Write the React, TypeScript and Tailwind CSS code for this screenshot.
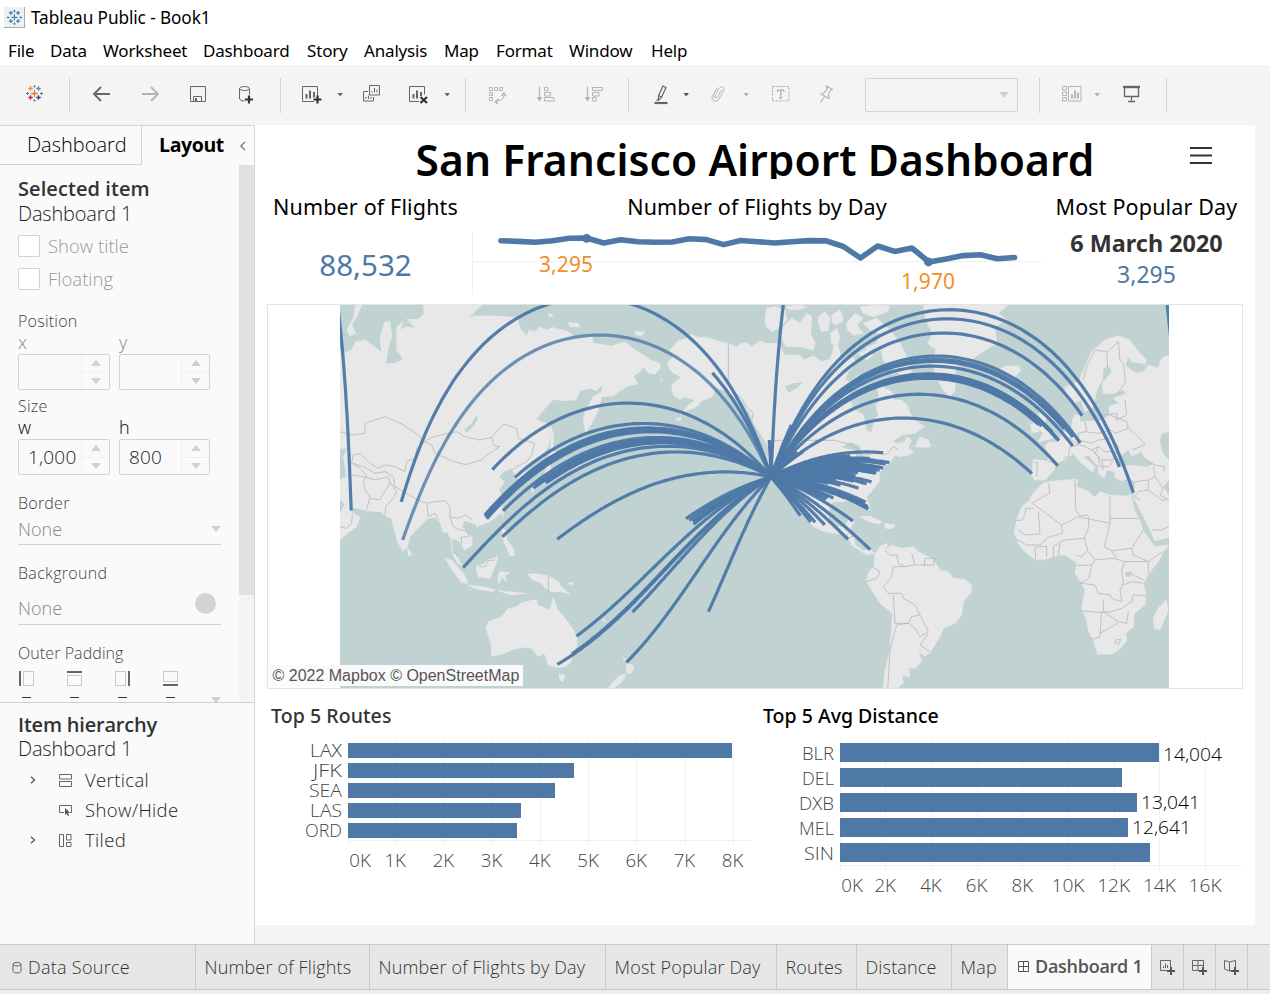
import React from "react";

/* ---------- projection and flight data ---------- */

const WORLD = 829.4;
const LEFT_LON = 50.5;
const EQUATOR_Y = 265.6;
const RAD = Math.PI / 180;

const SFO: [number, number] = [37.62, -122.38];

const AIRPORTS: [number, number, number?][] = [
  // Middle East and Asia
  [25.25, 55.36], [28.57, 77.1], [13.2, 77.7, 0.8], [40.08, 116.6], [37.46, 126.45], [1.36, 103.99],
  [22.31, 113.91], [23.39, 113.3], [24.0, 114.4], [25.08, 121.23], [14.51, 121.02], [31.14, 121.8],
  [34.43, 135.23], [35.76, 140.39], [35.55, 139.78], [13.48, 144.8], [22.0, 114.2], [33.6, 134.4],
  [22.8, 113.6], [23.8, 113.9], [35.0, 136.8],
  // Pacific
  [-33.95, 151.18], [-27.38, 153.12], [-37.67, 144.84], [-37.0, 174.79], [-17.55, -149.6], [-17.75, 177.44],
  [21.32, -157.92], [20.9, -156.43], [21.98, -159.34], [19.74, -156.04], [20.3, -155.8], [64.8, -147.86],
  // Europe
  [38.77, -9.13], [41.3, 2.08], [49.0, 2.55], [51.47, -0.45], [51.15, -0.19], [53.42, -6.27], [52.31, 4.76],
  [50.03, 8.57], [48.35, 11.79], [47.46, 8.55], [55.62, 12.65], [41.0, 28.8], [32.0, 34.88], [52.4, -2.5],
  [49.5, 1.8], [50.3, 0.8], [53.0, -5.0],
  // North America
  [49.19, -123.18], [47.45, -122.31], [45.59, -122.6], [51.13, -114.01], [53.3, -113.58], [43.68, -79.63],
  [45.47, -73.74], [42.36, -71.01], [40.64, -73.78], [40.69, -74.17], [39.87, -75.24], [38.95, -77.46],
  [38.85, -77.04], [39.18, -76.67], [35.88, -78.79], [35.21, -80.94], [33.64, -84.43], [28.43, -81.31],
  [25.79, -80.29], [26.07, -80.15], [27.98, -82.53], [29.99, -90.26], [29.98, -95.34], [30.19, -97.67],
  [32.9, -97.04], [39.86, -104.67], [41.97, -87.91], [44.88, -93.22], [42.21, -83.35], [41.41, -81.85],
  [40.49, -80.23], [40.0, -82.89], [39.05, -84.67], [39.72, -86.29], [39.3, -94.71], [38.75, -90.37],
  [29.53, -98.47], [33.43, -112.01], [33.94, -118.41], [32.73, -117.19], [36.08, -115.15], [40.79, -111.98],
  [36.12, -86.68], [42.94, -87.9], [41.3, -95.89], [35.39, -97.6], [43.56, -116.22], [45.78, -111.15],
  [46.92, -114.09], [45.8, -108.5], [21.04, -86.87], [19.44, -99.07], [20.52, -103.31], [23.15, -109.72],
  [20.68, -105.25], [9.07, -79.38], [13.44, -89.06], [32.1, -110.9], [35.04, -106.6], [36.2, -95.9],
  [37.6, -86.5], [38.2, -85.7], [43.1, -89.3], [34.7, -92.2], [36.3, -94.3], [40.8, -77.8], [31.5, -95.0],
  [43.1, -78.7], [44.5, -88.1], [41.9, -72.7], [26.8, -80.5], [37.6, -90.0], [33.6, -101.8], [39.5, -98.0],
];

const project = (lat: number, lon: number): [number, number] => {
  let d = lon - LEFT_LON;
  while (d < 0) d += 360;
  while (d >= 360) d -= 360;
  const y = EQUATOR_Y - (WORLD / (2 * Math.PI)) * Math.log(Math.tan(Math.PI / 4 + (lat * RAD) / 2));
  return [(d * WORLD) / 360, y];
};

const vec = ([lat, lon]: [number, number]) => [
  Math.cos(lat * RAD) * Math.cos(lon * RAD),
  Math.cos(lat * RAD) * Math.sin(lon * RAD),
  Math.sin(lat * RAD),
];

const line = (points: number[][], dx: number) =>
  points.map(([x, y], i) => `${i ? "L" : "M"}${(x + dx).toFixed(1)},${y.toFixed(1)}`).join("");

function greatCircle(to: [number, number]) {
  const a = vec(SFO);
  const b = vec(to);
  const angle = Math.acos(a[0] * b[0] + a[1] * b[1] + a[2] * b[2]);
  const points: number[][] = [];
  let wrap = 0;
  let lastX = NaN;
  for (let i = 0; i <= 80; i++) {
    const t = i / 80;
    const p = Math.sin((1 - t) * angle) / Math.sin(angle);
    const q = Math.sin(t * angle) / Math.sin(angle);
    const [x, y, z] = [0, 1, 2].map((k) => p * a[k] + q * b[k]);
    const [px, py] = project(Math.asin(z) / RAD, Math.atan2(y, x) / RAD);
    if (px - lastX > WORLD / 2) wrap -= WORLD;
    if (px - lastX < -WORLD / 2) wrap += WORLD;
    points.push([px + wrap, py]);
    lastX = px;
  }
  return wrap ? line(points, 0) + line(points, -wrap) : line(points, 0);
}

/* ---------- land outlines, drawn at three times map size ---------- */

const ASIA = [
  "265,15 440,15 400,55 420,48 480,48 545,52 555,85 575,108 583,90 600,95 612,82 640,90 650,82 700,95 718,110 770,108 775,130 830,138 870,125 900,150 925,165 950,182 975,190 975,205 960,222 940,218 925,200 915,215 895,228 908,252 880,258 850,275 835,288 800,290 790,330 770,370 752,398 745,360 752,330 775,290 800,275 803,253 785,272 765,265 735,272 722,300 690,302 655,298 630,325 603,358 640,372 645,400 640,440 610,480 575,505 572,520 580,545 560,555 548,535 528,505 505,515 492,532 508,545 492,570 505,600 497,640 465,665 430,678 410,668 388,662 380,680 412,715 410,738 388,750 372,722 350,715 350,750 370,775 380,798 368,790 352,760 348,720 338,695 325,698 315,665 300,652 280,655 255,678 225,710 215,745 204,754 188,725 175,680 170,655 150,648 138,635 95,632 55,622 45,635 75,652 65,680 38,700 15,720 15,640 30,612 15,598 15,540 35,530 30,500 25,470 38,445 15,445 15,150 28,160 50,150 62,125 90,120 115,138 140,157 135,110 150,65 165,65 170,110 158,150 152,192 180,190 205,178 185,150 185,80 205,65 195,90 215,80 242,85 215,58 250,58 268,40",
  "35,90 55,55 62,15 80,15 65,50 50,75 62,100 45,108",
  "350,15 372,15 375,30 355,28",
  "640,40 655,45 645,52", "700,68 730,70 735,80 705,80", "905,95 930,98 918,107",
  "645,375 655,400 655,440 647,448", "645,450 670,460 660,475 640,478", "640,485 648,505 635,545 600,560 590,560 610,540 630,520", "590,560 600,565 592,580",
  "500,625 508,632 502,652", "422,675 432,672 428,683",
  "500,685 510,690 515,720 535,745 538,765 525,768 515,745 502,712", "218,745 230,762 220,768",
  "330,775 350,780 385,820 400,850 380,848 355,815", "400,855 440,860 480,868 475,875 420,866",
  "425,798 440,795 460,780 488,770 485,785 475,810 465,835 430,830 424,812",
  "495,815 525,818 510,825 515,845 500,830 492,850 488,835",
  "580,822 605,822 640,828 670,845 680,862 705,882 680,875 650,875 630,865 620,850 590,838",
  "490,872 520,875 570,880 530,885",
  "595,900 605,900 608,915 632,925 645,930 655,893 668,930 690,955 712,985 726,1010 725,1040 705,1090 690,1100 665,1102 640,1095 628,1060 610,1070 590,1045 560,1042 530,1050 505,1062 470,1068 468,1030 453,985 460,965 500,950 520,925 540,922 560,908",
  "672,1122 690,1125 685,1145 675,1140", "825,1163 850,1130 868,1122 868,1135 845,1155 840,1163",
  "700,850 718,847 708,856", "803,955 813,965 807,962",
];

const AMERICA = [
  "200,190 220,170 210,150 235,122 260,115 275,103 290,112 320,112 350,122 385,132 410,140 425,130 440,128 455,140 480,122 500,130 540,130 545,150 555,165 600,165 610,180 640,168 665,185 690,178 700,150 705,120 718,150 725,190 745,180 760,172 768,190 745,215 735,240 750,245 775,225 785,245 760,260 745,290 760,325 790,345 800,392 815,398 822,365 835,345 828,320 838,290 830,260 850,262 875,275 880,300 905,300 925,320 930,340 945,360 973,380 945,400 905,405 875,425 895,430 915,425 920,410 935,420 925,445 940,455 925,465 900,470 885,465 870,490 850,500 838,520 838,545 810,580 798,590 808,615 808,630 798,625 788,600 770,598 740,600 730,605 700,605 688,620 685,655 700,680 735,680 745,660 762,665 750,690 742,700 762,705 765,735 790,752 812,750 828,765 815,760 800,765 775,748 755,735 745,715 720,702 690,698 660,690 635,675 625,645 600,618 590,600 570,585 585,620 600,645 580,620 555,585 540,560 510,540 503,505 505,440 490,415 465,375 452,345 425,300 400,290 380,275 350,262 335,290 305,302 290,320 265,330 240,345 262,318 285,300 255,290 240,298 220,285 215,255 232,240 245,232 215,215",
  "495,60 500,25 525,20 555,30 560,60 535,85 515,95 500,80", "560,20 600,15 620,22 590,30 565,28",
  "540,110 550,80 575,55 600,70 620,40 635,50 632,100 645,130 640,150 600,140 560,140",
  "655,50 675,35 690,55 685,90 665,95 655,70", "695,45 720,30 730,60 710,75 698,70", "692,100 710,85 720,110 710,140 695,130",
  "740,70 765,40 790,55 770,75 790,100 760,105 742,90", "780,20 830,15 870,18 862,35 820,50 790,40",
  "790,70 830,55 870,90 900,130 925,180 935,215 905,225 870,200 850,180 845,150 815,160 795,145 830,130 840,100 810,90",
  "775,160 800,150 820,165 800,180", "105,95 130,95 125,108 108,104", "180,240 188,240 184,243",
  "225,358 245,352 238,362", "780,650 810,650 845,665 835,672 800,658", "855,670 885,675 878,685 855,682",
  "80,1090 102,1098 95,1118 80,1120", "25,1163 50,1135 75,1122 62,1150 40,1163", "5,955 18,965 12,965", "70,1072 78,1078 72,1082",
];

const EAST = [
  "30,765 45,738 70,730 60,750 80,736 110,745 145,740 160,755 200,775 215,795 225,812 250,815 265,835 300,838 320,855 320,875 295,905 290,945 270,970 235,985 225,1010 195,1058 180,1068 160,1055 170,1085 150,1105 130,1105 135,1130 110,1125 115,1150 100,1163 55,1163 60,1110 75,1050 80,985 82,940 45,910 20,870 5,845 10,820 28,795",
  "175,15 430,15 400,40 425,60 390,80 395,130 345,160 320,180 272,198 270,270 255,290 235,270 215,235 203,190 212,150 188,130 203,100 182,60",
  "400,210 425,198 462,198 467,212 450,230 420,233 403,225",
  "520,340 545,348 540,370 560,395 565,415 520,425 535,400 518,385 528,370", "498,372 520,368 522,395 500,398",
  "150,440 165,410 190,420 197,440 180,442", "-15,650 20,650 45,670 20,668", "60,675 90,678 80,686 60,684",
  "500,585 530,552 550,545 600,540 638,538 635,560 672,575 690,592 705,575 735,585 775,588 798,585 808,630 828,668 835,695 850,712 868,740 912,735 893,758 880,785 850,822 835,850 842,880 840,915 808,940 805,980 782,1000 785,1022 760,1050 740,1062 698,1063 685,1020 670,990 665,960 650,930 655,900 660,870 645,842 630,820 635,790 620,778 600,765 580,765 540,778 512,780 480,755 460,730 448,700 455,660 470,620 492,602",
  "903,900 910,930 885,990 868,985 865,955 880,925",
  "805,590 815,600 912,600 912,712 868,723 860,700 838,655",
  "505,478 548,484 552,465 540,440 548,428 580,425 595,398 620,385 622,360 632,342 645,350 645,365 680,362 712,362 735,345 732,318 762,310 745,295 782,282 790,290 775,270 745,280 715,282 712,250 725,235 740,215 735,200 715,205 712,240 695,270 685,320 660,335 648,300 625,310 605,290 600,262 640,245 665,190 680,155 720,120 760,108 795,120 820,155 845,180 840,192 800,185 790,170 780,195 812,220 810,240 790,225 835,215 850,195 880,205 890,175 912,165 912,400 890,402 885,425 895,460 912,480 912,600 808,600 805,575 812,545 790,535 770,542 752,535 745,505 760,490 750,515 725,510 718,535 700,520 700,500 670,465 655,470 690,500 682,515 650,490 625,460 600,478 575,490 565,512 540,540 510,540 500,528",
];

const EAST_WATER = [
  "760,490 765,470 790,450 800,470 830,455 835,470 865,492 845,500 800,495 770,500",
  "890,402 912,395 912,480 895,460 885,425", "780,815 802,815 795,832 782,828",
  "912,540 895,560 912,585", "797,880 803,910 800,908",
];

const ASIA_BORDERS = [
  "15,395 50,405 90,400 90,370 150,350 200,372 245,402 270,425 290,412 320,405 365,395 385,408 430,420 470,412 478,438 495,440 460,462 440,480 390,494 345,480 300,460 290,435 270,425 245,445 240,475 215,485 210,515 180,500 150,495 130,505 105,490 75,460 55,465 50,490 75,505 95,525 85,545 90,570 105,590 95,630",
  "50,525 85,530 120,540 160,530 165,550 145,580 135,600 105,595", "165,545 185,575 175,595 152,620 150,648",
  "55,490 85,500 120,520 150,515 175,530 180,560 215,580 245,598 275,610 300,605 330,602 345,620 345,650 370,655 390,645 410,658",
  "275,610 280,650 300,640 312,660", "345,650 355,680 375,690 400,695 400,710 378,712 380,735", "350,755 370,765",
  "470,412 505,372 545,385 550,415 598,430 590,465 575,485 545,500 530,512", "430,800 450,800 460,782 480,780", "640,828 640,876",
  "15,680 35,685 50,670 52,645",
];
const AMERICA_BORDERS = [
  "385,132 385,250 400,275 425,295 440,320 460,340 455,360", "505,421 705,421 745,432 780,450 790,465 825,460 860,463 880,440 895,450",
  "590,603 640,600 665,620 685,645", "740,702 745,715 765,705",
];
const EAST_BORDERS = [
  "60,750 75,765 95,765 100,790 120,800 150,795 140,760", "120,800 85,800 80,830 55,860 70,880 110,880 115,895 150,915 165,945 140,950 130,970 90,970 85,885", "165,945 190,995 165,1010 150,985 130,970 95,975 75,1050 68,1163", "190,1000 165,1035 195,1055", "5,845 35,835 45,815 20,800", "150,795 205,795 208,775 180,775 178,798",
  "505,612 590,675 640,650 735,670 735,588", "735,655 820,655", "630,540 632,630 645,648 670,645", "500,610 555,578 550,550",
  "505,625 482,625 480,645 470,661 450,661", "520,635 525,702 482,705 460,690", "590,675 592,700 550,712 525,735 485,735 450,715", "670,650 672,680 658,715 600,720 585,725 580,765", "735,670 728,700 718,740 740,752 800,745 835,690",
  "545,770 545,738 510,742 512,780", "565,775 565,740 580,730", "658,715 668,750 650,770 635,765", "668,752 690,780 745,775 780,785 850,785 850,820", "690,780 680,795 635,797", "680,795 672,835 645,850 650,850 690,855 700,880 735,885 740,895 770,905 765,870 775,850 770,810 780,785", "645,932 700,937 740,935 770,925 800,905 805,885 842,887", "700,937 710,937 705,1010 680,1018", "715,900 715,935 760,965 785,970 790,935", "705,1000 740,980 760,968", "752,1020 768,1018 760,1033 750,1028 752,1020", "775,855 800,845 835,850", "795,820 835,840", "740,752 755,775", "800,745 805,765 850,785 893,755",
  "655,240 665,200 690,150 725,155 728,205", "728,155 760,125 765,180 775,190 782,245 760,280", "735,345 785,365 790,385 750,400 740,390 700,400 660,395 640,400 640,435 615,440 610,470 595,475", "660,365 665,395", "715,345 755,340 755,360 785,345 780,300", "790,385 820,410 840,435 800,450", "640,420 680,430 700,420 740,415 760,440 755,455 720,455 700,440 680,450 660,440 645,435", "700,440 690,460 710,480 745,480 755,455", "700,470 705,500 730,500 745,485", "710,480 715,510", "680,450 700,470", "508,487 517,487 515,530", "550,484 580,492", "590,400 620,420 640,435",
  "810,545 850,540 850,570 820,575 808,590 825,600", "865,500 870,530 850,540", "850,570 890,600 905,600", "870,530 895,565 885,585 912,600", "862,690 890,690 912,680", "850,485 870,495 900,500 895,515", "760,470 765,490",
];

const FlightMap = () => (
  <svg viewBox="0 0 829 383" className="block h-[383px] w-[829px] bg-[#c1d2d2]">
    {[
      { at: "translate(-5 -5) scale(.33333)", land: ASIA, lines: ASIA_BORDERS, water: ["388,390 410,370 425,345 428,360 410,385 395,398"] },
      { at: "translate(260 -5) scale(.33333)", land: AMERICA, lines: AMERICA_BORDERS, water: ["555,260 580,250 610,247 590,265 565,278", "725,440 755,425 780,440 790,470 770,475 765,450 735,445"] },
      { at: "translate(525 -5) scale(.33333)", land: EAST, lines: EAST_BORDERS, water: EAST_WATER },
    ].map((g) => (
      <g key={g.at} transform={g.at} strokeLinejoin="round">
        {g.land.map((p) => <polygon key={p} points={p} fill="#e8e8e8" stroke="#e8e8e8" strokeWidth="2" />)}
        {g.water.map((p) => <polygon key={p} points={p} fill="#c1d2d2" />)}
        {g.lines.map((p) => <polyline key={p} points={p} fill="none" stroke="#b6b6b6" strokeWidth="2.4" />)}
      </g>
    ))}
    <g fill="none" stroke="#4e79a7" strokeWidth="3.2">
      {AIRPORTS.map(([lat, lon, o], i) => <path key={i} d={greatCircle([lat, lon])} opacity={o ?? 0.97} />)}
    </g>
  </svg>
);

/* ---------- charts ---------- */

const DAYS = [240.7, 241.4, 242.3, 240.8, 238.2, 238, 243, 239.8, 241.8, 242.2, 242, 238.8, 239.6, 244.6, 240.5, 241.7, 243, 241.7, 240.6, 240.9, 246.5, 258, 246, 251.4, 248, 262, 259, 255.6, 254.8, 258.8, 257.5];

const DayChart = () => (
  <svg viewBox="472 229 570 72" className="block h-[72px] w-[570px] font-['Noto_Sans']">
    <path d="M472.5 232v63M472 261.5h570" stroke="#f0f0f0" fill="none" />
    <polyline points={DAYS.map((y, i) => `${501 + i * 17.12},${y}`).join(" ")} fill="none" stroke="#4e79a7" strokeWidth="5.6" strokeLinejoin="round" strokeLinecap="round" />
    <circle cx="586.6" cy="238.3" r="4.4" fill="#4e79a7" />
    <circle cx="928.5" cy="262" r="4.4" fill="#4e79a7" />
    <g fill="#f28e2b" fontSize="21" textAnchor="middle">
      <text x="566" y="271.500" textLength="54">3,295</text>
      <text x="928" y="288.500" textLength="54">1,970</text>
    </g>
  </svg>
);

const ROUTES: [string, number, number][] = [["LAX", 384, 32], ["JFK", 226, 29], ["SEA", 207, 33], ["LAS", 173, 32], ["ORD", 169, 37]];
const DISTANCES: [string, number, number, string?][] = [["BLR", 319, 32, "14,004"], ["DEL", 282, 32], ["DXB", 297, 35, "13,041"], ["MEL", 288, 35, "12,641"], ["SIN", 310, 30]];

const RoutesChart = () => (
  <svg viewBox="267 735 490 150" className="block h-[150px] w-[490px] font-['Open_Sans'] font-light">
    <path d={[0, 1, 2, 3, 4, 5, 6, 7, 8].map((k) => `M${Math.round(347.5 + k * 48.15) + 0.5} 740v105`).join("")} stroke="#f1f1f1" />
    <path d="M347 840.5h405" stroke="#f1f1f1" />
    {ROUTES.map(([name, w, tw], i) => (
      <g key={name}>
        <rect x="348" y={743 + i * 20} width={w} height="15" fill="#4e79a7" />
        <text x={342 - tw} y={757 + i * 20} textLength={tw} lengthAdjust="spacingAndGlyphs" fontSize="18" fill="#444">{name}</text>
      </g>
    ))}
    {["0K", "1K", "2K", "3K", "4K", "5K", "6K", "7K", "8K"].map((t, k) => (
      <text key={t} x={k ? 347 + k * 48.2 : 360} y="867" fontSize="18" fill="#444" textAnchor="middle" textLength="21.500" lengthAdjust="spacingAndGlyphs">{t}</text>
    ))}
  </svg>
);

const DistanceChart = () => (
  <svg viewBox="757 735 490 175" className="block h-[175px] w-[490px] font-['Open_Sans'] font-light">
    <path d={[0, 1, 2, 3, 4, 5, 6, 7, 8].map((k) => `M${Math.round(839.5 + k * 45.7) + 0.5} 740v130`).join("")} stroke="#f1f1f1" />
    <path d="M839 865.5h403" stroke="#f1f1f1" />
    {DISTANCES.map(([name, w, tw, label], i) => (
      <g key={name} fontSize="18">
        <rect x="840" y={743 + i * 25} width={w} height="19" fill="#4e79a7" />
        <text x={834 - tw} y={760 + i * 25} textLength={tw} lengthAdjust="spacingAndGlyphs" fill="#444">{name}</text>
        {label && <text x={844 + w} y={(i ? 759 : 761) + i * 25} fontSize="18.6" textLength="59" lengthAdjust="spacingAndGlyphs" fill="#000">{label}</text>}
      </g>
    ))}
    {["0K", "2K", "4K", "6K", "8K", "10K", "12K", "14K", "16K"].map((t, k) => (
      <text key={t} x={k ? 839.5 + k * 45.7 : 852} y="892" fontSize="18" fill="#444" textAnchor="middle" textLength={t.length > 2 ? 33 : 21.5} lengthAdjust="spacingAndGlyphs">{t}</text>
    ))}
  </svg>
);

/* ---------- icons ---------- */

type IconProps = { className?: string; children: React.ReactNode };
const Icon = ({ className = "", children }: IconProps) => (
  <svg viewBox="0 0 24 24" fill="none" stroke="#666" strokeWidth="1" className={"mb-[2px] block h-6 w-6 shrink-0 " + className}>{children}</svg>
);
const Caret = ({ className = "" }: { className?: string }) => (
  <svg viewBox="0 0 8 4" className={"block h-1 w-2 shrink-0 " + className}><path d="M1.5 0h5.4L4.2 3.6z" fill="currentColor" /></svg>
);
const Sep = ({ className = "" }: { className?: string }) => <div className={"h-[35px] w-px shrink-0 bg-[#d4d4d4] " + className} />;

const plus = (x: number, y: number, r: number) => `M${x - r} ${y}h${2 * r}M${x} ${y - r}v${2 * r}`;

const Logo = ({ mono = false }: { mono?: boolean }) => {
  const c = (v: string) => (mono ? "#3b82b0" : v);
  return (
    <g strokeWidth="1.3" fill="none">
      <path d={plus(12.5, 11.5, 3.4)} stroke={c("#e8762d")} />
      <path d={plus(8.5, 6.5, 2.2)} stroke={c("#eb912c")} />
      <path d={plus(16.5, 6.5, 2.2)} stroke={c("#5b879b")} />
      <path d={plus(8.5, 15.5, 2.2)} stroke={c("#c72035")} />
      <path d={plus(16.5, 15.5, 2.2)} stroke={c("#1f447e")} />
      <path d={plus(12.5, 4.5, 1.4) + plus(12.5, 18.5, 1.4)} stroke={c("#7199a6")} strokeWidth="1" />
      <path d={plus(5.5, 11.5, 1.4) + plus(19.5, 11.5, 1.4)} stroke={c("#5c6692")} strokeWidth="1" />
    </g>
  );
};

const Toolbar = () => (
  <div className="flex h-[60px] items-center bg-[#f4f4f4] pl-[22px]">
    <Icon><Logo /></Icon>
    <Sep className="ml-[23px]" />
    <Icon className="ml-[20px]"><path d="M4.5 12h15.5M11 5l-7 7 7 7" strokeWidth="1.8" /></Icon>
    <Icon className="ml-[24px]"><path d="M4 12h15.5M13 5l7 7-7 7" stroke="#b4b4b4" strokeWidth="1.8" /></Icon>
    <Icon className="ml-[24px]"><path d="M4.500 4.500h15v15h-15zM7.500 19.500v-5h8v5" /><path d="M9 16h2v3.500H9z" fill="#666" stroke="none" /></Icon>
    <Icon className="ml-[24px]"><ellipse cx="10.500" cy="6.500" rx="5" ry="2" /><path d="M5.500 6.500v10.500q1 2 5 2M15.500 6.500v6" /><path d={plus(15, 17.500, 4)} stroke="#333" strokeWidth="2.200" /></Icon>
    <Sep className="ml-[22px]" />
    <Icon className="ml-[18px]"><path d="M15 19.500H3.500v-15h15v10" /><path d="M7.500 12v4.500M11 8.500v8M15 10v5.500" strokeWidth="2" /><path d={plus(18.500, 17.500, 4)} stroke="#333" strokeWidth="2.200" /></Icon>
    <Caret className="ml-[13px] text-[#666]" />
    <Icon className="ml-[15px]"><path d="M10.500 3.500h10v9.500h-10zM9 9.500H4.500v9.500h10v-4M13 10.500V9M15.500 10.500V6M18 10.500V7.500M7 17v-2M9.500 17v-3.500M12 17v-2" /></Icon>
    <Icon className="ml-[23px]"><path d="M13 19.500H3.500v-15h15v8" /><path d="M7.500 12v4.500M11 8.500v8M15 10v4" strokeWidth="2" /><path d="M14.500 15l6.500 6M21 15l-6.500 6" stroke="#333" strokeWidth="2.200" /></Icon>
    <Caret className="ml-[13px] text-[#666]" />
    <Sep className="ml-[14px]" />
    <Icon className="ml-[19px]"><g stroke="#b4b4b4"><path d="M4.500 5.500h3v3h-3zM9.500 5.500h3v3h-3zM14.500 5.500h3v3h-3zM4.500 10.500h3v3h-3zM4.500 15.500h3v3h-3zM19 12q1 6-8 7.500" /><path d="M16.500 14l2.500-3 2 3M13.500 17l-3 2.500 2 2.500" strokeWidth="1.400" /></g></Icon>
    <Icon className="ml-[25px]"><g stroke="#b4b4b4"><path d="M5.500 4.500v14" strokeWidth="1.200" /><path d="M2.500 15h6l-3 4.500z" fill="#b4b4b4" stroke="none" /><path d="M10.500 5.500h3.500v3h-3.500zM10.500 10.500h6v3.500h-6zM10.500 15.500h9.500v3.500h-9.500z" /></g></Icon>
    <Icon className="ml-[24px]"><g stroke="#b4b4b4"><path d="M5.500 4.500v14" strokeWidth="1.200" /><path d="M2.500 15h6l-3 4.500z" fill="#b4b4b4" stroke="none" /><path d="M10.500 5.500h10v3h-10zM10.500 10.500h6.500v3.500h-6.500zM10.500 15.500h3.500v3.500h-3.500z" /></g></Icon>
    <Sep className="ml-[22px]" />
    <Icon className="ml-[20px]"><path d="M14 4l3 1.500-4.500 10-3 2.500 0-4zM9.500 13.500l3 1.500M9 17.500l-1.500 1" strokeWidth="1.200" /><path d="M5.500 21h13" strokeWidth="2.200" /></Icon>
    <Caret className="ml-[9px] text-[#555]" />
    <Icon className="ml-[16px]"><path d="M9 15.500l5-9q1.500-2.500 3.500-1.500t1 4l-5 8.500q-2 2.500-4.500 1.500t-2-4l5-9M10 15q1 2 2.500 0l4-7" stroke="#b4b4b4" transform="translate(-1 0)" /></Icon>
    <Caret className="ml-[12px] text-[#b0b0b0]" />
    <Icon className="ml-[19px]"><path d="M3.500 4.500h16.500v14.500h-16.500z" stroke="#b4b4b4" strokeDasharray="2.500 1" /><path d="M8.500 10V8h6.500v2M11.750 8v8M10 16h3.500" stroke="#a0a0a0" /></Icon>
    <Icon className="ml-[21px]"><path d="M12.500 4l6 3.500-2 1-2 3.500.5 4.500-8-4.500 3.500-1.500 2.500-3.500zM10.500 14.500l-4 6" stroke="#b8b8b8" strokeWidth="1.300" /></Icon>
    <div className="ml-[27px] flex h-[34px] w-[153px] shrink-0 items-center justify-end rounded-[2px] border border-[#d4d4d4] pr-[7px]">
      <svg viewBox="0 0 12 6" className="block h-[6px] w-3"><path d="M1 0h10L6 6z" fill="#d0d0d0" /></svg>
    </div>
    <Sep className="ml-[21px]" />
    <Icon className="ml-[20px]"><path d="M2.500 4.500h4v3.500h-4zM2.500 10h4v3.500h-4zM2.500 15.500h4v3.500h-4zM8.500 4.500h12.500v14.500h-12.500z" stroke="#b4b4b4" /><path d="M12 16.500v-4M15 16.500v-8M18 16.500v-6" stroke="#b0b0b0" strokeWidth="1.800" /></Icon>
    <Caret className="ml-[9px] text-[#b0b0b0]" />
    <Icon className="ml-[18px]"><path d="M5.500 6v8.500h14V6M12.500 14.500v4M9 19.500h7" strokeWidth="1.300" /><path d="M4 5h17" strokeWidth="2.400" /></Icon>
    <Sep className="ml-[23px]" />
  </div>
);

/* ---------- left panel ---------- */

const Spin = ({ value = "", w }: { value?: string; w: string }) => (
  <div className={"flex h-[36px] rounded-[2px] border border-[#d4d4d4] " + w}>
    <div className="flex min-w-0 flex-1 items-center border-r border-[#f0f0f0] pl-[9px] text-[19px] tracking-[.01em] text-[#222]">{value}</div>
    <div className="flex w-[27px] flex-col divide-y divide-[#f0f0f0]">
      <div className="flex flex-1 items-center justify-center"><svg viewBox="0 0 10 6" className="h-[6px] w-[10px]"><path d="M0 6h10L5 0z" fill="#d0d0d0" /></svg></div>
      <div className="flex flex-1 items-center justify-center"><svg viewBox="0 0 10 6" className="h-[6px] w-[10px]"><path d="M0 0h10L5 6z" fill="#d0d0d0" /></svg></div>
    </div>
  </div>
);

const PadIcon = ({ side }: { side: "l" | "t" | "r" | "b" }) => {
  const bar = { l: "M1 0v15", t: "M0 1h15", r: "M14 0v15", b: "M0 14h15" }[side];
  const box = { l: "M4.500.5h10v14h-10z", t: "M.5 4.500h14v10h-14z", r: "M.5.5h10v14h-10z", b: "M.5.5h14v10h-14z" }[side];
  return (
    <div className="w-[48px]">
      <svg viewBox="0 0 15 15" fill="none" className="block h-[15px] w-[15px]">
        <path d={box} stroke="#999" strokeDasharray="1 1" />
        <path d={bar} stroke="#666" strokeWidth="2" />
      </svg>
      <div className="ml-[3px] mt-[11px] h-px w-[9px] bg-[#333]" />
    </div>
  );
};

const Check = ({ label, gap }: { label: string; gap: string }) => (
  <div className={"flex h-[22px] items-center gap-[8px] text-[18.5px] text-[#999] " + gap}>
    <div className="h-[22px] w-[22px] rounded-[1px] border border-[#d4d4d4] bg-white" />
    <span>{label}</span>
  </div>
);

const TreeRow = ({ label, open, children }: { label: string; open?: boolean; children: React.ReactNode }) => (
  <div className="flex h-[30px] items-center">
    <svg viewBox="0 0 8 8" className="ml-[29px] block h-2 w-2" fill="none" stroke="#555" strokeWidth="1.300">{open && <path d="M2 .8L5.500 4 2 7.200" />}</svg>
    <svg viewBox="0 0 15 15" className="ml-[21px] block h-[15px] w-[15px]" fill="none" stroke="#666">{children}</svg>
    <span className="ml-[12px] text-[18.5px] tracking-[.02em] text-[#222]">{label}</span>
  </div>
);

const LeftPanel = () => (
  <aside className="flex w-[255px] shrink-0 flex-col border-r border-t border-[#d4d4d4] bg-[#fafafa] font-['Open_Sans'] font-light leading-none">
    <div className="flex h-[39px] shrink-0">
      <div className="flex w-[142px] items-center border-b border-r border-[#d4d4d4] pl-[27px] text-[20px] text-black">Dashboard</div>
      <div className="flex flex-1 items-center pl-[17px] text-[19.5px] font-bold tracking-[-.02em] text-black">
        <span className="w-[80px] pb-[2px]">Layout</span>
        <svg viewBox="0 0 8 12" className="h-[10px] w-[7px]" fill="none" stroke="#666" strokeWidth="1.400"><path d="M7 1L2 6l5 5" /></svg>
      </div>
    </div>
    <div className="flex h-[537px] shrink-0 overflow-hidden">
      <div className="flex w-[239px] flex-col pl-[18px] pt-[11px]">
        <div className="flex h-[25px] shrink-0 items-center text-[20px] font-semibold tracking-[.004em] text-[#333]">Selected item</div>
        <div className="flex h-[25px] shrink-0 items-center text-[20px] tracking-[-.01em] text-[#222]">Dashboard 1</div>
        <Check label="Show title" gap="mt-[9px]" />
        <Check label="Floating" gap="mt-[11px]" />
        <div className="mt-[21px] flex h-[20px] shrink-0 items-center text-[16px] tracking-[.015em] text-[#444]">Position</div>
        <div className="flex h-[21px] shrink-0 items-center text-[18px] text-[#888]"><span className="w-[101px]">x</span><span>y</span></div>
        <div className="mt-[2px] flex shrink-0 gap-[9px]"><Spin w="w-[92px]" /><Spin w="w-[91px]" /></div>
        <div className="mt-[6px] flex h-[20px] shrink-0 items-center text-[16px] tracking-[.015em] text-[#444]">Size</div>
        <div className="flex h-[22px] shrink-0 items-center text-[18px] text-black"><span className="w-[101px]">w</span><span>h</span></div>
        <div className="mt-px flex shrink-0 gap-[9px]"><Spin w="w-[92px]" value="1,000" /><Spin w="w-[91px]" value="800" /></div>
        <div className="mt-[18px] flex h-[20px] shrink-0 items-center text-[16px] tracking-[.015em] text-[#444]">Border</div>
        <div className="mt-[1px] flex h-[31px] w-[203px] shrink-0 items-center justify-between border-b border-[#d0d0d0] text-[18px] text-[#888]">
          <span>None</span>
          <svg viewBox="0 0 10 6" className="block h-[6px] w-[10px]"><path d="M0 0h10L5 6z" fill="#d0d0d0" /></svg>
        </div>
        <div className="mt-[18px] flex h-[20px] shrink-0 items-center text-[16px] tracking-[.02em] text-[#444]">Background</div>
        <div className="mt-[9px] flex h-[33px] w-[203px] shrink-0 items-center justify-between border-b border-[#d0d0d0] pr-[5px] text-[18px] text-[#888]">
          <span>None</span>
          <span className="mb-[9px] h-[21px] w-[21px] rounded-full bg-[#d4d4d4]" />
        </div>
        <div className="mt-[18px] flex h-[20px] shrink-0 items-center text-[16px] tracking-[.005em] text-[#444]">Outer Padding</div>
        <div className="mt-[8px] flex shrink-0 items-end pl-px">
          <PadIcon side="l" /><PadIcon side="t" /><PadIcon side="r" /><PadIcon side="b" />
          <svg viewBox="0 0 10 6" className="-mb-[5px] block h-[6px] w-[10px]"><path d="M0 0h10L5 6z" fill="#d0d0d0" /></svg>
        </div>
      </div>
      <div className="w-[15px] bg-[#f4f4f4]"><div className="h-[430px] w-full bg-[#e0e0e0]" /></div>
    </div>
    <div className="flex-1 border-t border-[#d0d0d0] pt-[9px]">
      <div className="flex h-[25px] items-center pl-[18px] text-[20px] font-semibold tracking-[-.01em] text-[#333]">Item hierarchy</div>
      <div className="mb-[4px] flex h-[24px] items-center pl-[18px] text-[20px] tracking-[-.01em] text-[#222]">Dashboard 1</div>
      <TreeRow label="Vertical" open><path d="M1.500 1.500h12v4.500h-12zM1.500 8.500h12v5h-12z" /></TreeRow>
      <TreeRow label="Show/Hide"><path d="M6 9.500H1.500v-7h12v7H12" /><path d="M7 5v7l1.700-1.500 1.300 2.500 1.200-.6-1.200-2.400 2-.2z" fill="#555" stroke="none" /></TreeRow>
      <TreeRow label="Tiled" open><path d="M1.500 1.500h4v12h-4zM8.500 1.500h4.500v5.500h-4.500zM8.500 9.500h4.500v4h-4.500z" /></TreeRow>
    </div>
  </aside>
);

/* ---------- dashboard ---------- */

const heading = "flex h-[50px] items-center justify-center pt-[5px] text-[21.5px] tracking-[.007em]";

const Canvas = () => (
  <main className="h-[800px] w-[1000px] shrink-0 bg-white font-['Noto_Sans'] text-black">
    <header className="flex h-[54px] overflow-hidden pl-[160.500px]">
      <h1 className="w-[774px] shrink-0 whitespace-nowrap pt-[6px] text-[42.5px] font-semibold leading-[58px] tracking-[.002em]">San Francisco Airport Dashboard</h1>
      <svg viewBox="0 0 22 17" className="mt-[22px] block h-[17px] w-[22px] shrink-0"><path d="M0 1h22M0 8.500h22M0 16h22" stroke="#333" strokeWidth="2" /></svg>
    </header>
    <section className="flex h-[125px] text-center leading-none">
      <div className="w-[217px] pl-[4px]">
        <h2 className={heading}>Number of Flights</h2>
        <p className="mt-[21px] text-[29.5px] leading-[30px] text-[#4e79a7]">88,532</p>
      </div>
      <div className="w-[570px]">
        <h2 className={heading}>Number of Flights by Day</h2>
        <DayChart />
      </div>
      <div className="w-[213px] pr-[4px]">
        <h2 className={heading}>Most Popular Day</h2>
        <p className="mt-[2px] text-[23.4px] font-bold leading-[25px] text-[#333]">6 March 2020</p>
        <p className="mt-[6px] text-[23px] leading-[24px] text-[#4e79a7]">3,295</p>
      </div>
    </section>
    <section className="relative ml-[12px] h-[385px] w-[976px] border border-[#e4e4e4] pl-[72px]">
      <FlightMap />
      <div className="absolute bottom-[2px] left-0 flex h-[21px] w-[255px] items-center bg-[#fafafa] pl-[4.500px] font-['Liberation_Sans'] text-[16px] text-[#555]">© 2022 Mapbox © OpenStreetMap</div>
    </section>
    <section className="flex pl-[12px] font-medium leading-none">
      <div className="w-[490px]">
        <h3 className="flex h-[46px] items-center pl-[4px] pt-[8px] text-[19.5px] tracking-[.004em] text-[#333]">Top 5 Routes</h3>
        <RoutesChart />
      </div>
      <div className="w-[490px]">
        <h3 className="flex h-[46px] items-center pl-[6px] pt-[8px] text-[19.5px]">Top 5 Avg Distance</h3>
        <DistanceChart />
      </div>
    </section>
  </main>
);

/* ---------- frame ---------- */

const MENU: [string, string][] = [
  ["File", "w-[42px]"], ["Data", "w-[53px]"], ["Worksheet", "w-[100px]"], ["Dashboard", "w-[104px]"], ["Story", "w-[57px]"],
  ["Analysis", "w-[80px]"], ["Map", "w-[52px]"], ["Format", "w-[73px]"], ["Window", "w-[82px]"], ["Help", "w-[50px]"],
];

const TABS: [string, string][] = [
  ["Number of Flights", "w-[174px]"], ["Number of Flights by Day", "w-[236px]"], ["Most Popular Day", "w-[171px]"],
  ["Routes", "w-[80px]"], ["Distance", "w-[95px]"], ["Map", "w-[56px]"],
];

const tab = "flex shrink-0 items-center border-r border-[#cacaca] ";

export default function App() {
  return (
    <div className="flex h-[994px] w-[1270px] flex-col overflow-hidden bg-[#f4f4f4] font-['Open_Sans',sans-serif]">
      <div className="flex h-[35px] shrink-0 items-center bg-white pl-[4px] font-['Noto_Sans'] text-[17.2px] tracking-[-.005em]">
        <svg viewBox="1 0 22 22" className="mr-[6px] block h-[21px] w-[21px] border-b border-r border-[#aaa] bg-[#f0f0f0]"><Logo mono /></svg>
        Tableau Public - Book1
      </div>
      <nav className="flex h-[30px] shrink-0 items-center bg-white pl-[8px] pt-px font-['Noto_Sans'] text-[17px] tracking-[-.01em]">
        {MENU.map(([t, w]) => <span key={t} className={"shrink-0 whitespace-nowrap " + w}>{t}</span>)}
      </nav>
      <Toolbar />
      <div className="flex h-[819px] shrink-0">
        <LeftPanel />
        <Canvas />
      </div>
      <div className="flex h-[46px] shrink-0 border-b border-t border-[#cacaca] bg-[#e6e6e6] text-[18px] font-light tracking-[.009em] text-[#333]">
        <div className={tab + "w-[196px] pl-[12px] tracking-[.015em]"}>
          <svg viewBox="0 0 10 13" className="mr-[6px] block h-[13px] w-[10px]" fill="none" stroke="#666"><path d="M1 3q0-1.500 4-1.500t4 1.500v7.500q-1 1.500-4 1.500t-4-1.500zM1 3.500q1 1.500 4 1.500t4-1.500" /></svg>
          Data Source
        </div>
        {TABS.map(([t, w]) => <div key={t} className={tab + "whitespace-nowrap pl-[8.500px] " + w}>{t}</div>)}
        <div className={tab + "w-[144px] bg-[#fafafa] pb-[2px] pl-[10px] font-semibold tracking-[-.015em] text-[#555]"}>
          <svg viewBox="0 0 11 11" className="mr-[6px] block h-[11px] w-[11px] shrink-0" fill="none" stroke="#555"><path d="M.5.5h10v10h-10zM5.500.5v10M.5 5.500h10" /></svg>
          <span className="whitespace-nowrap">Dashboard 1</span>
        </div>
        {[
          "M9 11.500H1.500v-10h10v7M4.500 9V7M6.500 9V4.500M8.500 9V6",
          "M9 11.500H1.500v-10h11v7M7 1.500v10M1.500 6.500h11",
          "M6.500 3v9L1.500 10V1.500L6.500 3L12.500 1.500v7M8 11.500l-1.500 .5",
        ].map((d) => (
          <div key={d} className={tab + "w-[32px] justify-center"}>
            <svg viewBox="0 0 17 17" className="block h-[17px] w-[17px]" fill="none" stroke="#666"><path d={d} /><path d={plus(12, 12, 4)} stroke="#555" strokeWidth="2" /></svg>
          </div>
        ))}
      </div>
      <div className="flex-1 bg-[#ececec]" />
    </div>
  );
}
